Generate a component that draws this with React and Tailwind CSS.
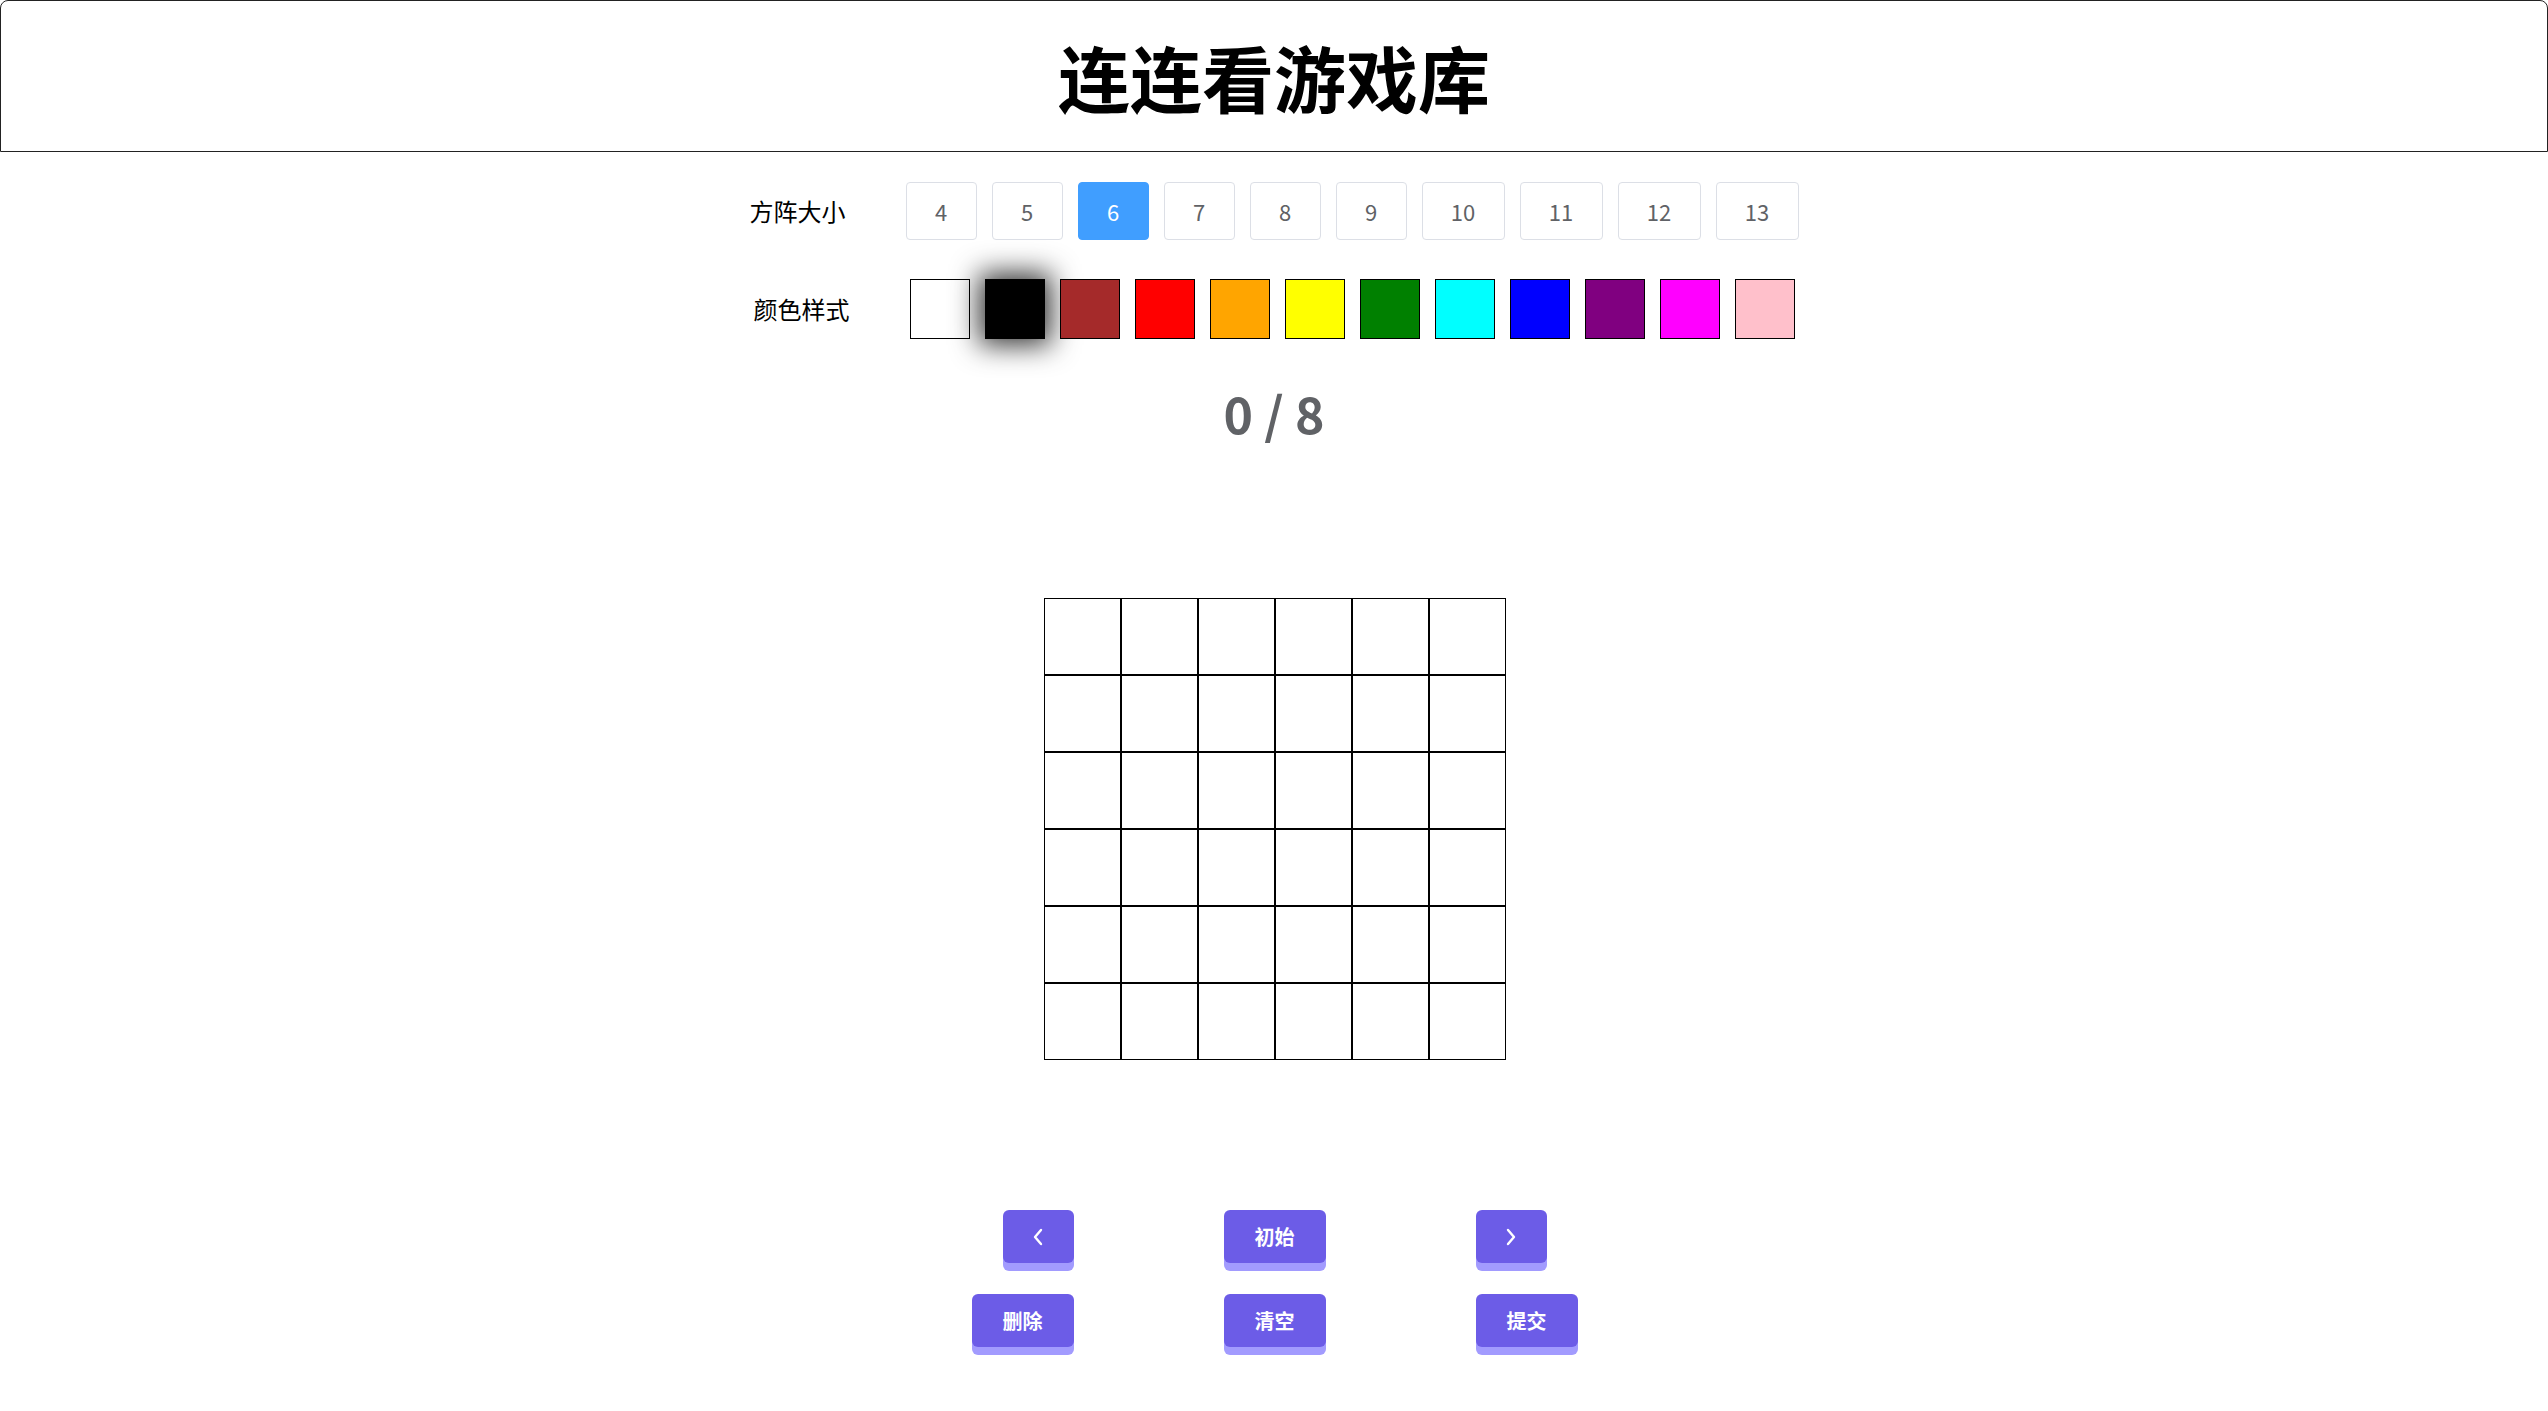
import { useState } from 'react'

const sizes = [4, 5, 6, 7, 8, 9, 10, 11, 12, 13]
const colors = [
  'bg-[#ffffff]', 'bg-[#000000]', 'bg-[#a52a2a]', 'bg-[#ff0000]', 'bg-[#ffa500]', 'bg-[#ffff00]',
  'bg-[#008000]', 'bg-[#00ffff]', 'bg-[#0000ff]', 'bg-[#800080]', 'bg-[#ff00ff]', 'bg-[#ffc0cb]',
]

function ActionButton({ children, wide }) {
  return (
    <button
      className={`${wide ? 'w-[102px]' : 'w-[71px]'} h-[53px] rounded-[6px] bg-[#6c5ce7] text-white text-[20px] font-bold shadow-[0_8px_0_#a29bfe] flex items-center justify-center`}
    >
      {children}
    </button>
  )
}

export default function App() {
  const [size, setSize] = useState(6)
  const [color, setColor] = useState(1)
  const cells = Array.from({ length: size * size })

  return (
    <div className="min-h-screen bg-white font-['Noto_Sans_CJK_SC','Noto_Sans',sans-serif]">
      <div className="h-[152px] border border-[#222] rounded-t-[8px] flex items-center justify-center">
        <h1 className="text-[72px] font-bold leading-none text-black">连连看游戏库</h1>
      </div>

      <div className="mt-[30px] flex items-center justify-center">
        <span className="w-[96px] text-[24px] text-black">方阵大小</span>
        <div className="ml-[60px] flex gap-[15px]">
          {sizes.map((s) => (
            <button
              key={s}
              onClick={() => setSize(s)}
              className={`${s >= 10 ? 'w-[83px]' : 'w-[71px]'} h-[58px] rounded-[4px] border text-[22px] ${size === s ? 'bg-[#409eff] border-[#409eff] text-white' : 'bg-white border-[#dcdfe6] text-[#606266]'}`}
            >
              {s}
            </button>
          ))}
        </div>
      </div>

      <div className="mt-[39px] flex items-center justify-center">
        <span className="w-[96px] text-[24px] text-black">颜色样式</span>
        <div className="ml-[60px] flex gap-[15px]">
          {colors.map((c, i) => (
            <div
              key={c}
              onClick={() => setColor(i)}
              className={`w-[60px] h-[60px] border border-black ${c} ${color === i ? 'shadow-[0_0_28px_6px_rgba(0,0,0,0.8)]' : ''}`}
            />
          ))}
        </div>
      </div>

      <div className="mt-[48px] h-[53px] text-center text-[50px] leading-none font-semibold text-[#606266]">
        0 / 8
      </div>

      <div className="mt-[158px] flex justify-center pl-[2px]">
        <div
          className="grid"
          style={{ gridTemplateColumns: `repeat(${size}, ${462 / size}px)` }}
        >
          {cells.map((_, i) => (
            <div key={i} className="border border-black bg-white" style={{ height: 462 / size }} />
          ))}
        </div>
      </div>

      <div className="mt-[150px] flex justify-center gap-[150px] pl-[2px]">
        <div className="w-[102px] flex flex-col items-end gap-[31px]">
          <ActionButton>
            <svg width="14" height="18" viewBox="0 0 14 18" fill="none" stroke="white" strokeWidth="2.4" strokeLinecap="round" strokeLinejoin="round">
              <path d="M10 2 L4 9 L10 16" />
            </svg>
          </ActionButton>
          <ActionButton wide>删除</ActionButton>
        </div>
        <div className="w-[102px] flex flex-col items-center gap-[31px]">
          <ActionButton wide>初始</ActionButton>
          <ActionButton wide>清空</ActionButton>
        </div>
        <div className="w-[103px] flex flex-col items-start gap-[31px]">
          <ActionButton>
            <svg width="14" height="18" viewBox="0 0 14 18" fill="none" stroke="white" strokeWidth="2.4" strokeLinecap="round" strokeLinejoin="round">
              <path d="M4 2 L10 9 L4 16" />
            </svg>
          </ActionButton>
          <ActionButton wide>提交</ActionButton>
        </div>
      </div>
    </div>
  )
}
